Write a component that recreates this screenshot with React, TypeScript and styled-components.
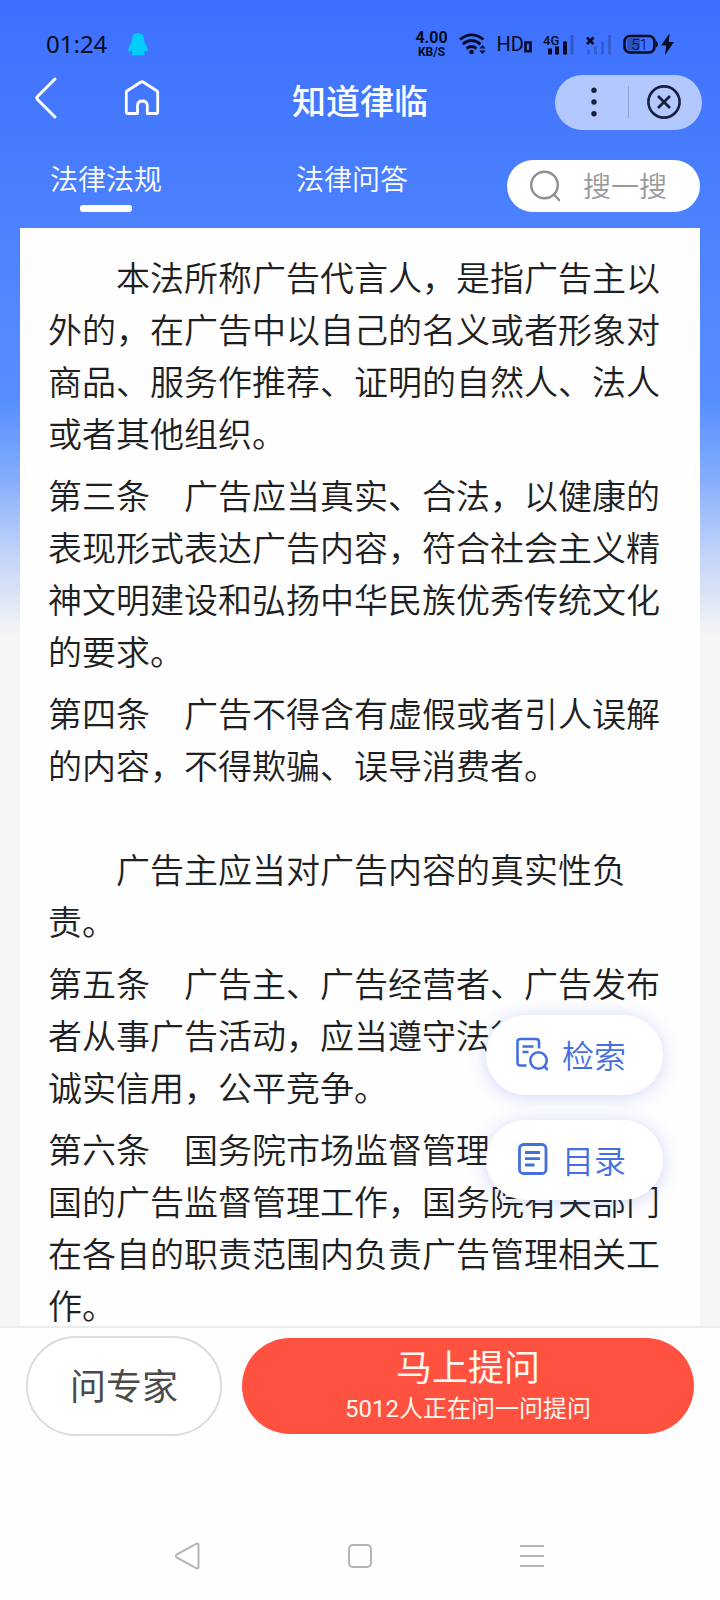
import React from 'react';
import styled, { createGlobalStyle } from 'styled-components';

const sans = '"Noto Sans CJK SC", sans-serif';

const GlobalStyle = createGlobalStyle`
  *, *::before, *::after { box-sizing: border-box; }
  body { margin: 0; font-family: ${sans}; background: #fdfdfd; }
  button, input { font-family: inherit; }
  button { border: 0; padding: 0; margin: 0; background: none; color: inherit; cursor: pointer; }
  svg { display: block; flex: none; }
`;

const Page = styled.div`
  display: flex;
  flex-direction: column;
  height: 100vh;
  background: linear-gradient(
    to bottom,
    #3d70ff 0,
    #4c82ff 228px,
    #568eff 400px,
    #86adfc 480px,
    #bfd2f8 550px,
    #f6f6f6 636px
  );
`;

const StatusBar = styled.div`
  display: flex;
  align-items: center;
  justify-content: space-between;
  height: 74px;
  padding: 14px 46px 0;
  color: #040b22;
`;

const StatusGroup = styled.div<{ $gap: number }>`
  display: flex;
  align-items: center;
  gap: ${(p) => p.$gap}px;
`;

const Clock = styled.time`
  font: 400 24px/28px "Noto Sans", sans-serif;
`;

const NetSpeed = styled.div`
  font: 700 16px/16px Roboto, sans-serif;
  text-align: center;
  small {
    display: block;
    font-size: 12px;
    line-height: 12px;
  }
`;

const HdLabel = styled.span`
  display: flex;
  align-items: flex-end;
  font: 400 20px/24px Roboto, sans-serif;
`;

const NavBar = styled.header`
  display: grid;
  grid-template-columns: 1fr auto 1fr;
  align-items: center;
  height: 56px;
  padding: 0 18px 0 34px;
  color: #fff;
`;

const NavActions = styled.nav`
  display: flex;
  align-items: center;
  gap: 66px;
  padding-bottom: 8px;
`;

const Title = styled.h1`
  margin: 0;
  padding: 0 16px 4px 0;
  font-size: 34px;
  line-height: 48px;
  font-weight: 500;
`;

const Capsule = styled.div`
  display: flex;
  align-items: center;
  justify-self: end;
  width: 147px;
  height: 55px;
  padding: 0 4px;
  border-radius: 28px;
  background: #b3c8ff;
  color: #16203a;
`;

const CapsuleButton = styled.button`
  display: flex;
  flex: 1;
  align-items: center;
  justify-content: center;
  height: 100%;
`;

const CapsuleDivider = styled.span`
  width: 1px;
  height: 32px;
  background: #8fa3d6;
`;

const TabRow = styled.div`
  display: flex;
  align-items: flex-start;
  justify-content: space-between;
  padding: 30px 20px 16px 50px;
`;

const Tabs = styled.nav`
  display: flex;
  gap: 134px;
`;

const Tab = styled.a<{ $active?: boolean }>`
  display: flex;
  flex-direction: column;
  align-items: center;
  gap: 9px;
  color: #fff;
  font-size: 28px;
  line-height: 36px;
  font-weight: 350;
  text-decoration: none;
  white-space: nowrap;
  &::after {
    content: '';
    width: 52px;
    height: 7px;
    border-radius: 3px;
    background: ${(p) => (p.$active ? '#fff' : 'transparent')};
  }
`;

const SearchBox = styled.label`
  display: flex;
  align-items: center;
  gap: 22px;
  width: 193px;
  height: 52px;
  padding: 0 22px;
  border-radius: 26px;
  background: #fff;
  color: #8f8f8f;
`;

const SearchInput = styled.input`
  flex: 1;
  min-width: 0;
  height: 40px;
  padding: 0 0 2px;
  border: 0;
  outline: 0;
  background: none;
  color: #333;
  font-size: 28px;
  font-weight: 350;
  &::placeholder { color: #999; opacity: 1; }
`;

const Body = styled.main`
  position: relative;
  flex: 1;
  min-height: 0;
  display: flex;
  padding: 0 20px;
`;

const Article = styled.article`
  flex: 1;
  padding: 23px 28px;
  overflow: hidden;
  background: #fefefe;
`;

const Clause = styled.p`
  margin: 0 0 10px;
  color: #1f1f1f;
  font-size: 34px;
  line-height: 52px;
  font-weight: 350;
  white-space: pre-wrap;
`;

const FloatingActions = styled.div`
  position: absolute;
  right: 57px;
  bottom: 126px;
  display: flex;
  flex-direction: column;
  gap: 25px;
`;

const FloatingButton = styled.button`
  display: flex;
  align-items: center;
  gap: 14px;
  height: 80px;
  padding: 0 37px 3px 30px;
  border-radius: 40px;
  background: #fff;
  box-shadow: 0 2px 18px rgba(72, 112, 230, 0.26);
  color: #4470dd;
  font-size: 32px;
  line-height: 44px;
  font-weight: 350;
`;

const Footer = styled.footer`
  border-top: 2px solid #ececec;
  background: #fefefe;
`;

const FooterActions = styled.div`
  display: flex;
  align-items: center;
  gap: 20px;
  padding: 8px 26px 0;
`;

const ExpertButton = styled.button`
  width: 196px;
  height: 100px;
  padding-bottom: 4px;
  border: 2px solid #dcdcdc;
  border-radius: 50px;
  background: #fff;
  color: #4a4a4a;
  font-size: 36px;
  line-height: 48px;
`;

const AskButton = styled.button`
  display: flex;
  flex: 1;
  flex-direction: column;
  align-items: center;
  justify-content: center;
  height: 96px;
  border-radius: 48px;
  background: #ff5140;
  color: #fff6f0;
  font-size: 36px;
  line-height: 46px;
  small {
    font-family: Roboto, ${sans};
    font-size: 24px;
    line-height: 42px;
  }
`;

const SystemNav = styled.nav`
  display: grid;
  grid-template-columns: repeat(3, 1fr);
  justify-items: center;
  align-items: center;
  height: 88px;
  margin-top: 76px;
  padding: 0 102px;
  color: #b4b4b4;
`;

const clauses = [
  '　　本法所称广告代言人，是指广告主以外的，在广告中以自己的名义或者形象对商品、服务作推荐、证明的自然人、法人或者其他组织。',
  '第三条　广告应当真实、合法，以健康的表现形式表达广告内容，符合社会主义精神文明建设和弘扬中华民族优秀传统文化的要求。',
  '第四条　广告不得含有虚假或者引人误解的内容，不得欺骗、误导消费者。\n\n　　广告主应当对广告内容的真实性负责。',
  '第五条　广告主、广告经营者、广告发布者从事广告活动，应当遵守法律、法规，诚实信用，公平竞争。',
  '第六条　国务院市场监督管理部门主管全国的广告监督管理工作，国务院有关部门在各自的职责范围内负责广告管理相关工作。',
];

const PenguinIcon = () => (
  <svg width="20" height="23" viewBox="0 0 20 23" fill="#00cdfa">
    <path d="M10 0C6 0 4 2.800 4 6.500C4 9 2.600 10.500 1.400 13C.4 15.200 0 17.500.5 18.300C1.200 18.800 2.200 18 3.200 17.200C3.300 18.200 3.800 19 4.200 19.600V22.300H16.400V19.600C16.600 19 16.800 18.200 16.900 17.200C17.800 18 18.800 18.800 19.500 18.300C20 17.500 19.600 15.200 18.600 13C17.400 10.500 16 9 16 6.500C16 2.800 14 0 10 0Z" />
  </svg>
);

const WifiIcon = () => (
  <svg width="27" height="22" viewBox="0 0 27 22" fill="none" stroke="currentColor" strokeWidth="2.800">
    <path d="M1 6.500Q12.500-2.800 24.500 6.500" />
    <path d="M3.800 11.300Q12.500 3.800 21.500 11.300" />
    <path d="M7.500 15.600Q12.500 11.500 17.500 15.600" />
    <circle cx="12.500" cy="19" r="2.300" fill="currentColor" stroke="none" />
    <path d="M20.300 15.500L23.500 12L26.700 15.500ZM20.300 17.500L23.500 21L26.700 17.500Z" fill="currentColor" stroke="none" />
  </svg>
);

const SimIcon = () => (
  <svg width="8" height="22" viewBox="0 0 8 22" fill="none" stroke="currentColor" strokeWidth="2.600">
    <path d="M1.500 8.500H6.500V17.300H1.500Z" />
  </svg>
);

const SignalIcon = () => (
  <svg width="32" height="22" viewBox="0 0 32 22" fill="currentColor">
    <text x="0" y="11.500" fontFamily="Roboto, sans-serif" fontSize="13" fontWeight="500">4G</text>
    <path d="M5 15.500H9V21.500H5ZM12 13.500H16V21.500H12ZM20 8.500H24V21.500H20Z" />
    <path d="M27.500 2H30.500V21.500H27.500Z" opacity=".25" />
  </svg>
);

const NoSignalIcon = () => (
  <svg width="26" height="22" viewBox="0 0 26 22" fill="currentColor">
    <path d="M1 4.500L7.500 11M7.500 4.500L1 11" stroke="currentColor" strokeWidth="2.600" />
    <path d="M1 16.500H4V21.500H1ZM8 13.500H11V21.500H8ZM15 8.500H18V21.500H15ZM22 2H25V21.500H22Z" opacity=".2" />
  </svg>
);

const BatteryIcon = () => (
  <svg width="51" height="24" viewBox="0 0 51 24" fill="currentColor">
    <rect x="1.500" y="4" width="30" height="16.500" rx="5.500" fill="none" stroke="currentColor" strokeWidth="2.600" />
    <path d="M6.500 6H17V18.500H6.500Q4 18.500 4 15.500V9Q4 6 6.500 6Z" opacity=".3" />
    <path d="M33 9Q35 9.500 35 12.200Q35 15 33 15.500Z" />
    <text x="16.500" y="17.500" textAnchor="middle" fontFamily="Roboto, sans-serif" fontSize="15" fontWeight="300">51</text>
    <path d="M46.500 1.500L38 13.500H43.200L42 23L51 10H45.800Z" />
  </svg>
);

const BackIcon = () => (
  <svg width="24" height="44" viewBox="0 0 24 44" fill="none" stroke="currentColor" strokeWidth="3" strokeLinecap="round" strokeLinejoin="round">
    <path d="M21 3L3.500 20.500Q2.300 22 3.500 23.500L21 41" />
  </svg>
);

const HomeIcon = () => (
  <svg width="36" height="36" viewBox="0 0 36 36" fill="none" stroke="currentColor" strokeWidth="2.800" strokeLinejoin="round">
    <path d="M13.500 33.500H4Q2.300 33.500 2.300 32V12.500Q2.300 11.500 3.300 10.700L16.500 2.200Q18 1.300 19.500 2.200L32.700 10.700Q33.700 11.500 33.700 12.500V32Q33.700 33.500 32 33.500H23.300V25.500Q23 21 18.400 21Q13.800 21 13.500 25.500Z" />
  </svg>
);

const MoreIcon = () => (
  <svg width="8" height="32" viewBox="0 0 8 32" fill="currentColor">
    <circle cx="4" cy="4.200" r="2.700" />
    <circle cx="4" cy="16" r="2.700" />
    <circle cx="4" cy="27.800" r="2.700" />
  </svg>
);

const CloseIcon = () => (
  <svg width="36" height="36" viewBox="0 0 36 36" fill="none" stroke="currentColor" strokeWidth="2.600">
    <circle cx="18" cy="18" r="15.600" />
    <path d="M12 12L24 24M24 12L12 24" strokeWidth="2.800" />
  </svg>
);

const SearchIcon = () => (
  <svg width="32" height="32" viewBox="0 0 32 32" fill="none" stroke="currentColor" strokeWidth="2.400" strokeLinecap="round">
    <circle cx="15.500" cy="15" r="13.300" />
    <path d="M25 24.500L30 30" />
  </svg>
);

const LookupIcon = () => (
  <svg width="32" height="34" viewBox="0 0 32 34" fill="none" stroke="currentColor" strokeWidth="2.600">
    <path d="M10.500 28.500H4.500Q1.500 28.500 1.500 25.500V5Q1.500 2 4.500 2H20Q23 2 23 5V11.500" />
    <path d="M6.500 9.500H17.500M6.500 15H12.500" />
    <circle cx="22.500" cy="23.500" r="8.200" />
    <path d="M28 29L32 33" />
  </svg>
);

const ContentsIcon = () => (
  <svg width="32" height="34" viewBox="0 0 32 34" fill="none" stroke="currentColor" strokeWidth="2.800">
    <rect x="3.500" y="2.500" width="26.500" height="29" rx="4" />
    <path d="M9 10.500H24M9 16.700H24M9 23H18.500" />
  </svg>
);

const SystemBackIcon = () => (
  <svg width="28" height="28" viewBox="0 0 28 28" fill="none" stroke="currentColor" strokeWidth="2" strokeLinejoin="round">
    <path d="M22.500 1.700L2.500 12.700Q1 14 2.500 15.300L22.500 26.300Q24.500 26.800 24.500 25V3Q24.500 1.200 22.500 1.700Z" />
  </svg>
);

const SystemHomeIcon = () => (
  <svg width="26" height="26" viewBox="0 0 26 26" fill="none" stroke="currentColor" strokeWidth="2">
    <rect x="2" y="2" width="22" height="22" rx="4" />
  </svg>
);

const SystemMenuIcon = () => (
  <svg width="24" height="24" viewBox="0 0 24 24" stroke="currentColor" strokeWidth="2">
    <path d="M0 2H24M0 12H24M0 22H24" />
  </svg>
);

export default function App() {
  return (
    <>
      <GlobalStyle />
      <Page>
        <StatusBar>
          <StatusGroup $gap={21}>
            <Clock>01:24</Clock>
            <PenguinIcon />
          </StatusGroup>
          <StatusGroup $gap={11}>
            <NetSpeed>
              4.00<small>KB/S</small>
            </NetSpeed>
            <WifiIcon />
            <HdLabel>
              HD
              <SimIcon />
            </HdLabel>
            <SignalIcon />
            <NoSignalIcon />
            <BatteryIcon />
          </StatusGroup>
        </StatusBar>

        <NavBar>
          <NavActions>
            <button type="button" aria-label="返回"><BackIcon /></button>
            <button type="button" aria-label="首页"><HomeIcon /></button>
          </NavActions>
          <Title>知道律临</Title>
          <Capsule>
            <CapsuleButton type="button" aria-label="更多"><MoreIcon /></CapsuleButton>
            <CapsuleDivider />
            <CapsuleButton type="button" aria-label="关闭"><CloseIcon /></CapsuleButton>
          </Capsule>
        </NavBar>

        <TabRow>
          <Tabs>
            <Tab href="#laws" $active>法律法规</Tab>
            <Tab href="#answers">法律问答</Tab>
          </Tabs>
          <SearchBox>
            <SearchIcon />
            <SearchInput type="text" placeholder="搜一搜" aria-label="搜一搜" />
          </SearchBox>
        </TabRow>

        <Body>
          <Article>
            {clauses.map((text) => (
              <Clause key={text}>{text}</Clause>
            ))}
          </Article>
          <FloatingActions>
            <FloatingButton type="button"><LookupIcon />检索</FloatingButton>
            <FloatingButton type="button"><ContentsIcon />目录</FloatingButton>
          </FloatingActions>
        </Body>

        <Footer>
          <FooterActions>
            <ExpertButton type="button">问专家</ExpertButton>
            <AskButton type="button">
              马上提问
              <small>5012人正在问一问提问</small>
            </AskButton>
          </FooterActions>
          <SystemNav>
            <button type="button" aria-label="后退"><SystemBackIcon /></button>
            <button type="button" aria-label="主屏幕"><SystemHomeIcon /></button>
            <button type="button" aria-label="菜单"><SystemMenuIcon /></button>
          </SystemNav>
        </Footer>
      </Page>
    </>
  );
}
